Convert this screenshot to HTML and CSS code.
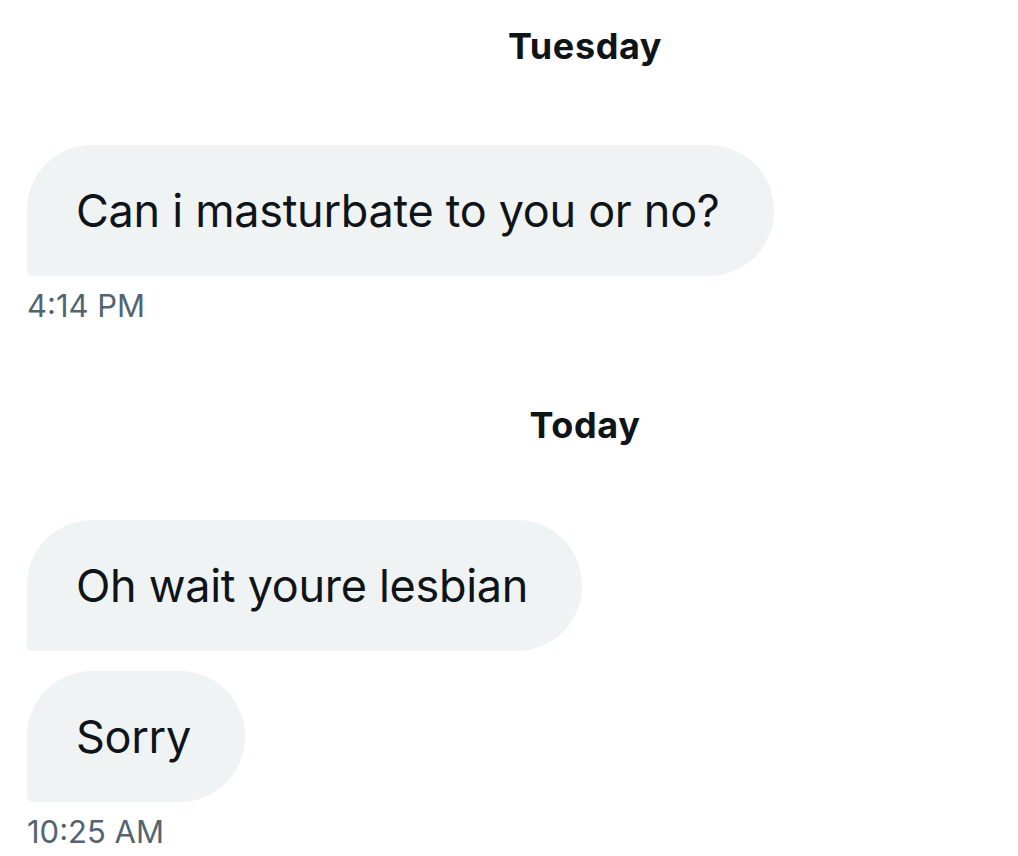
FILE: index.html
```html
<!DOCTYPE html>
<html lang="en">
<head>
<meta charset="utf-8">
<title>Messages</title>
<link rel="stylesheet" href="styles.css">
</head>
<body>
<main class="thread">
  <div class="day">Tuesday</div>
  <section class="group group-first">
    <div class="bubble">Can i masturbate to you or no?</div>
    <div class="time">4:14 PM</div>
  </section>
  <div class="day day-second">Today</div>
  <section class="group group-second">
    <div class="bubble">Oh wait youre lesbian</div>
    <div class="bubble">Sorry</div>
    <div class="time">10:25 AM</div>
  </section>
</main>
</body>
</html>
```

FILE: styles.css
```css
* { box-sizing: border-box; }
html, body {
  margin: 0;
  padding: 0;
  background: #ffffff;
}
body {
  width: 1018px;
  height: 856px;
  overflow: hidden;
  font-family: Inter, "Liberation Sans", sans-serif;
  color: #0f1419;
}
.thread {
  display: flex;
  flex-direction: column;
  padding: 24px 0 0 27px;
}
.day {
  align-self: stretch;
  padding-left: 125px;
  text-align: center;
  font-weight: 700;
  font-size: 36px;
  line-height: 44px;
  letter-spacing: 0.6px;
  color: #0f1419;
}
.day-second { margin-top: 79px; }
.group {
  display: flex;
  flex-direction: column;
  align-items: flex-start;
  gap: 20px;
}
.group-first { margin-top: 77px; }
.group-second { margin-top: 73px; }
.bubble {
  height: 131px;
  display: flex;
  align-items: center;
  padding: 0 54px 0 49px;
  background: #eff3f4;
  border-radius: 65px 65px 65px 6px;
  font-size: 45px;
  letter-spacing: -0.3px;
  color: #0f1419;
}
.time {
  margin-top: -8px;
  padding-left: 0;
  font-size: 31px;
  line-height: 36px;
  letter-spacing: 0;
  color: #536471;
}
```
